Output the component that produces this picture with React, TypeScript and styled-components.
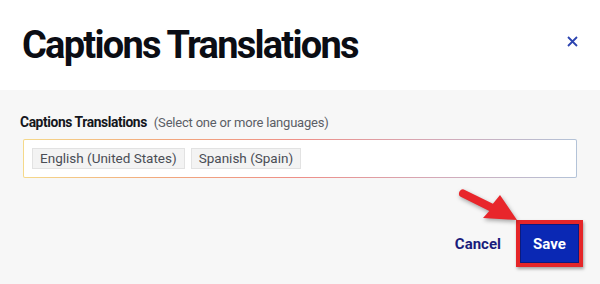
import React from "react"
import styled, { createGlobalStyle } from "styled-components"

const GlobalStyle = createGlobalStyle`
  html, body {
    margin: 0;
    padding: 0;
    background: #f7f7f7;
  }
  body {
    font-family: "Roboto", "Liberation Sans", sans-serif;
  }
`

const Modal = styled.div`
  width: 600px;
  height: 284px;
  display: flex;
  flex-direction: column;
  position: relative;
  overflow: hidden;
`

const Header = styled.div`
  height: 90px;
  background: #fff;
  display: flex;
  align-items: center;
  justify-content: space-between;
  padding: 0 20px 0 22px;
  box-sizing: border-box;
`

const Title = styled.h1`
  margin: 0;
  font-size: 38px;
  font-weight: 700;
  letter-spacing: -1.75px;
  color: #0b0d14;
  line-height: 1;
  padding-bottom: 1px;
`

const CloseButton = styled.button`
  border: none;
  background: none;
  padding: 0;
  width: 16px;
  height: 16px;
  display: flex;
  align-items: center;
  justify-content: center;
  margin-bottom: 8px;
  cursor: pointer;
`

const Body = styled.div`
  flex: 1;
  background: #f7f7f7;
  padding: 24px 23px 0 23px;
  display: flex;
  flex-direction: column;
`

const Label = styled.div`
  color: #14161c;
  display: flex;
  gap: 7px;
  align-items: baseline;
  margin-left: -3px;
`

const LabelStrong = styled.span`
  font-size: 13.8px;
  font-weight: 700;
  letter-spacing: -0.4px;
`

const LabelHint = styled.span`
  font-size: 13px;
  color: #5b5e66;
  font-weight: 400;
  letter-spacing: -0.2px;
`

const GradientBorder = styled.div`
  margin-top: 9px;
  padding: 1px;
  border-radius: 2px;
  background: linear-gradient(90deg, #f5d98a 0%, #f2a87d 25%, #ee8f88 50%, #d4a9b8 75%, #b3c3d8 100%);
`

const Input = styled.div`
  background: #fff;
  height: 37px;
  display: flex;
  align-items: center;
  gap: 6px;
  padding: 0 8px;
  border-radius: 1px;
`

const Chip = styled.span`
  background: #f3f3f3;
  border: 1px solid #e2e2e2;
  color: #4a4d55;
  font-size: 13.5px;
  padding: 1px 7px;
  line-height: 17px;
`

const Footer = styled.div`
  display: flex;
  justify-content: flex-end;
  align-items: center;
  gap: 15px;
  margin-top: 42px;
  margin-right: -6px;
`

const CancelButton = styled.button`
  border: none;
  background: none;
  font-family: inherit;
  font-size: 15px;
  font-weight: 700;
  color: #1a1c7c;
  padding: 0;
  cursor: pointer;
`

const Highlight = styled.div`
  border: 4px solid #e52629;
  box-shadow: 1px 2px 3px rgba(0, 0, 0, 0.35);
  display: flex;
`

const SaveButton = styled.button`
  box-sizing: border-box;
  border: 1px solid #0a1a80;
  background: #0a28b4;
  color: #fff;
  font-family: inherit;
  font-size: 15px;
  font-weight: 700;
  width: 59px;
  height: 39px;
  cursor: pointer;
`

const Arrow = styled.svg`
  position: absolute;
  left: 455px;
  top: 186px;
  filter: drop-shadow(1px 2px 2px rgba(0, 0, 0, 0.35));
`

export default function App() {
  return (
    <>
      <GlobalStyle />
      <Modal>
        <Header>
          <Title>Captions Translations</Title>
          <CloseButton aria-label="Close">
            <svg width="11" height="11" viewBox="0 0 11 11">
              <path d="M1 1 L10 10 M10 1 L1 10" stroke="#2c44b0" strokeWidth="1.8" />
            </svg>
          </CloseButton>
        </Header>
        <Body>
          <Label>
            <LabelStrong>Captions Translations</LabelStrong>
            <LabelHint>(Select one or more languages)</LabelHint>
          </Label>
          <GradientBorder>
            <Input>
              <Chip>English (United States)</Chip>
              <Chip>Spanish (Spain)</Chip>
            </Input>
          </GradientBorder>
          <Footer>
            <CancelButton>Cancel</CancelButton>
            <Highlight>
              <SaveButton>Save</SaveButton>
            </Highlight>
          </Footer>
        </Body>
        <Arrow width="70" height="50" viewBox="0 0 70 50">
          <path
            d="M8.8 3.4 L37.9 17.7 L45 9 L62 34 L28 32 L34.3 24.9 L5.2 10.6 Q3 9 4.5 5.5 Q6.5 2.5 8.8 3.4 Z"
            fill="#e8262b"
          />
        </Arrow>
      </Modal>
    </>
  )
}
